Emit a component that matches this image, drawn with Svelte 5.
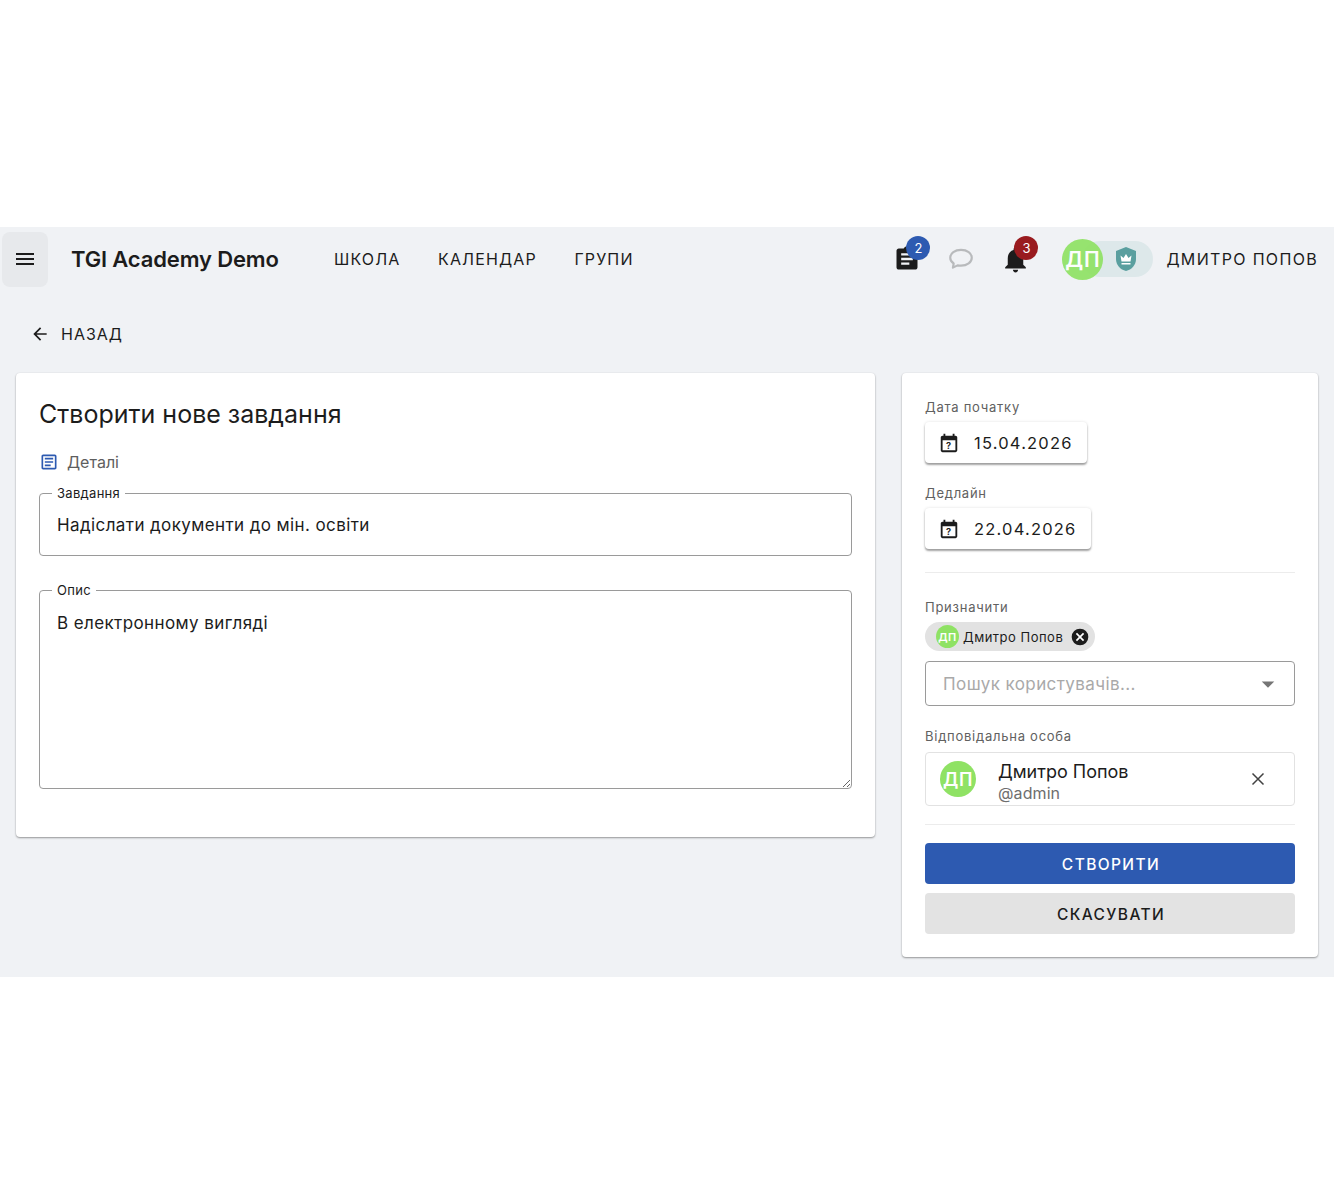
<script>
  let title = $state("Надіслати документи до мін. освіти");
  let desc = $state("В електронному вигляді");
  const nav = ["Школа", "Календар", "Групи"];
  const dates = [
    { label: "Дата початку", value: "15.04.2026" },
    { label: "Дедлайн", value: "22.04.2026" }
  ];
</script>

<div class="page">
  <header class="topbar">
    <button class="burger" aria-label="menu">
      <svg width="24" height="24" viewBox="0 0 24 24"><path d="M3 18h18v-2H3zm0-5h18v-2H3zm0-7v2h18V6z" /></svg>
    </button>
    <div class="brand">TGI Academy Demo</div>
    <nav class="nav">
      {#each nav as n}
        <span>{n}</span>
      {/each}
    </nav>
    <div class="right">
      <div class="ico tasks">
        <svg width="28" height="28" viewBox="0 0 24 24"><path d="M19 3h-4.180C14.400 1.840 13.300 1 12 1s-2.400.84-2.820 2H5c-1.100 0-2 .9-2 2v14c0 1.100.9 2 2 2h14c1.100 0 2-.9 2-2V5c0-1.100-.9-2-2-2m-5 14H7v-2h7zm3-4H7v-2h10zm0-4H7V7h10z" /></svg>
        <span class="badge blue">2</span>
      </div>
      <div class="ico chat">
        <svg width="28" height="28" viewBox="0 0 26 26"><path d="M13 4.500c-5.700 0-10 3.200-10 7.300 0 2.200 1.200 4.100 3.200 5.400l-.7 3.800 4.300-2.100c1 .2 2.100.3 3.200.3 5.700 0 10-3.200 10-7.400S18.700 4.500 13 4.500z" fill="none" stroke="#b8babc" stroke-width="2" stroke-linejoin="round" /></svg>
      </div>
      <div class="ico bell">
        <svg width="31" height="31" viewBox="0 0 24 24"><path d="M12 22c1.100 0 2-.9 2-2h-4c0 1.100.9 2 2 2m6-6v-5c0-3.070-1.630-5.640-4.500-6.320V4c0-.83-.67-1.500-1.500-1.500s-1.500.67-1.500 1.500v.68C7.640 5.360 6 7.920 6 11v5l-2 2v1h16v-1z" /></svg>
        <span class="badge red">3</span>
      </div>
      <div class="profile">
        <div class="pill">
          <svg width="24" height="26" viewBox="0 0 24 26">
            <path d="M12 1 2 5v8c0 6 4.300 10.700 10 12 5.700-1.300 10-6 10-12V5z" fill="#5a9f9f" />
            <path d="M6.500 9.500 9.500 12 12 8l2.500 4 3-2.500-1 6h-9zM7.500 17h9v1.500h-9z" fill="#fff" />
          </svg>
        </div>
        <div class="avatar big">ДП</div>
      </div>
      <span class="username">Дмитро Попов</span>
    </div>
  </header>

  <button class="back">
    <svg width="20" height="20" viewBox="0 0 24 24"><path d="M20 11H7.830l5.590-5.590L12 4l-8 8 8 8 1.410-1.410L7.830 13H20z" /></svg>
    <span>Назад</span>
  </button>

  <main class="columns">
    <section class="card left">
      <h1>Створити нове завдання</h1>
      <div class="section-title">
        <svg width="20" height="20" viewBox="0 0 24 24"><path d="M19 5v14H5V5zm0-2H5c-1.100 0-2 .9-2 2v14c0 1.100.9 2 2 2h14c1.100 0 2-.9 2-2V5c0-1.100-.9-2-2-2m-5 14H7v-2h7zm3-4H7v-2h10zm0-4H7V7h10z" fill="#2d5ab1" /></svg>
        <span>Деталі</span>
      </div>
      <fieldset class="outlined">
        <legend>Завдання</legend>
        <input bind:value={title} />
      </fieldset>
      <fieldset class="outlined area">
        <legend>Опис</legend>
        <textarea bind:value={desc}></textarea>
      </fieldset>
    </section>

    <aside class="card side">
      {#each dates as d}
        <div class="label">{d.label}</div>
        <div class="date">
          <svg width="22" height="22" viewBox="0 0 24 24">
            <path d="M19 4h-1V2h-2v2H8V2H6v2H5c-1.100 0-2 .9-2 2v14c0 1.100.9 2 2 2h14c1.100 0 2-.9 2-2V6c0-1.100-.9-2-2-2m0 16H5V9h14z" />
            <text x="12" y="18.500" text-anchor="middle" font-size="10" font-weight="700" font-family="Inter">?</text>
          </svg>
          <span>{d.value}</span>
        </div>
      {/each}

      <hr class="rule first" />

      <div class="label">Призначити</div>
      <div class="chip">
        <div class="avatar small">ДП</div>
        <span>Дмитро Попов</span>
        <svg width="20" height="20" viewBox="0 0 24 24"><circle cx="12" cy="12" r="10" fill="#1c1c1c" /><path d="M17 15.590 15.590 17 12 13.410 8.410 17 7 15.590 10.590 12 7 8.410 8.410 7 12 10.590 15.590 7 17 8.410 13.410 12z" fill="#fff" /></svg>
      </div>
      <div class="select">
        <span>Пошук користувачів...</span>
        <svg width="30" height="30" viewBox="0 0 24 24"><path d="m7 10 5 5 5-5z" fill="#757575" /></svg>
      </div>

      <div class="label resp">Відповідальна особа</div>
      <div class="person">
        <div class="avatar mid">ДП</div>
        <div class="who">
          <div class="name">Дмитро Попов</div>
          <div class="nick">@admin</div>
        </div>
        <svg width="24" height="24" viewBox="0 0 24 24"><path d="M6.500 6.500l11 11M17.500 6.500l-11 11" fill="none" stroke="#424242" stroke-width="1.500" /></svg>
      </div>

      <hr class="rule second" />

      <button class="btn primary">Створити</button>
      <button class="btn ghost">Скасувати</button>
    </aside>
  </main>
</div>

<style>
  :global(body) {
    background: #fff;
    font-family: Inter, "Liberation Sans", sans-serif;
    color: #1c1c1c;
  }

  .page {
    margin-top: 227px;
    height: 750px;
    background: #f0f2f5;
    overflow: hidden;
    box-sizing: border-box;
  }

  .topbar {
    display: flex;
    align-items: center;
    height: 64px;
    padding: 0 16px 0 2px;
  }

  .burger {
    width: 46px;
    height: 55px;
    border: 0;
    border-radius: 8px;
    background: #e7e9ec;
    display: flex;
    align-items: center;
    justify-content: center;
    padding: 0;
  }

  .burger svg {
    fill: #1c1c1c;
  }

  .brand {
    margin-left: 23px;
    width: 263px;
    font-size: 22px;
    font-weight: 600;
    letter-spacing: -0.15px;
    color: #1c1c1c;
  }

  .nav {
    display: flex;
    gap: 37.500px;
    font-size: 16px;
    letter-spacing: 1.150px;
    text-transform: uppercase;
  }

  .right {
    margin-left: auto;
    display: flex;
    align-items: center;
  }

  .ico {
    position: relative;
    width: 26px;
    height: 26px;
    display: flex;
    align-items: center;
    justify-content: center;
  }

  .ico svg {
    fill: #1c1c1c;
    flex: none;
  }

  .chat,
  .bell {
    margin-left: 28px;
  }

  .badge {
    position: absolute;
    top: -10px;
    left: 12px;
    width: 24px;
    height: 24px;
    border-radius: 50%;
    color: #fff;
    font-size: 13px;
    display: flex;
    align-items: center;
    justify-content: center;
  }

  .blue {
    background: #2d5ab1;
  }

  .red {
    background: #991b1f;
  }

  .profile {
    position: relative;
    margin-left: 34px;
    width: 91px;
    height: 36px;
  }

  .pill {
    position: absolute;
    top: 0;
    right: 0;
    width: 71px;
    height: 36px;
    border-radius: 18px;
    background: #dde8ea;
    display: flex;
    align-items: center;
    justify-content: flex-end;
    padding-right: 15px;
    box-sizing: border-box;
  }

  .avatar {
    border-radius: 50%;
    background: #8fe264;
    color: #fff;
    font-weight: 600;
    display: flex;
    align-items: center;
    justify-content: center;
    flex: none;
  }

  .avatar.big {
    position: absolute;
    top: -2px;
    left: 0;
    width: 41px;
    height: 41px;
    font-size: 21px;
    letter-spacing: 1px;
    opacity: 0.92;
  }

  .avatar.mid {
    width: 36px;
    height: 36px;
    font-size: 18px;
    letter-spacing: 0.5px;
  }

  .avatar.small {
    width: 23px;
    height: 23px;
    font-size: 11px;
  }

  .username {
    margin-left: 13px;
    font-size: 16px;
    letter-spacing: 1.33px;
    text-transform: uppercase;
    white-space: nowrap;
  }

  .back {
    display: flex;
    align-items: center;
    gap: 11px;
    margin: 28px 0 0 30px;
    padding: 0;
    height: 30px;
    border: 0;
    background: none;
    font: inherit;
    font-size: 16px;
    letter-spacing: 1px;
    text-transform: uppercase;
    color: #1c1c1c;
  }

  .back svg {
    fill: #1c1c1c;
  }

  .columns {
    display: flex;
    align-items: flex-start;
    gap: 27px;
    margin: 24px 16px 0;
  }

  .card {
    background: #fff;
    border-radius: 4px;
    box-sizing: border-box;
    box-shadow: 0 1px 2px rgba(0, 0, 0, 0.38), 0 0 2px rgba(0, 0, 0, 0.06);
  }

  .left {
    width: 859px;
    height: 464px;
    padding: 23px 23px 0;
  }

  h1 {
    margin: 0;
    font-size: 25px;
    line-height: 36px;
    font-weight: 400;
  }

  .section-title {
    display: flex;
    align-items: center;
    gap: 8px;
    margin: 18px 0 0;
    height: 24px;
    color: #5e5e5e;
    font-size: 16px;
  }

  .outlined {
    margin: 11px 0 0;
    padding: 0 17px;
    border: 1px solid #9a9a9a;
    border-radius: 4px;
    height: 71px;
    box-sizing: border-box;
  }

  .outlined.area {
    height: 207px;
    margin-top: 26px;
    position: relative;
  }

  legend {
    padding: 0 5px;
    margin-left: -5px;
    font-size: 13px;
    line-height: 16px;
    letter-spacing: 0.3px;
  }

  input,
  textarea {
    display: block;
    width: 100%;
    border: 0;
    outline: 0;
    padding: 0;
    background: none;
    font: inherit;
    font-size: 17px;
    letter-spacing: 0.4px;
    color: #1c1c1c;
  }

  input {
    height: 24px;
    margin-top: 12px;
  }

  textarea {
    position: absolute;
    left: 17px;
    right: 0;
    top: 13px;
    bottom: 0;
    width: calc(100% - 17px);
    height: calc(100% - 13px);
    line-height: 24px;
    resize: vertical;
  }

  .side {
    width: 416px;
    height: 584px;
    padding: 23px;
  }

  .label {
    font-size: 13px;
    line-height: 22px;
    letter-spacing: 0.75px;
    color: #616161;
  }

  .date {
    display: inline-flex;
    align-items: center;
    gap: 14px;
    height: 41px;
    padding: 0 14px 0 13px;
    margin: 4px 0 19px;
    border-radius: 4px;
    background: #fff;
    font-size: 16.500px;
    letter-spacing: 1.2px;
    box-shadow: 0 2px 2px rgba(0, 0, 0, 0.35), 0 0 3px rgba(0, 0, 0, 0.12);
  }

  .date svg {
    fill: #1c1c1c;
  }

  .rule {
    margin: 0;
    border: 0;
    border-top: 1px solid #ececec;
  }

  .rule.first {
    margin-top: 4px;
    margin-bottom: 23px;
  }

  .rule.second {
    margin-top: 18px;
    margin-bottom: 18px;
  }

  .chip {
    display: inline-flex;
    align-items: center;
    gap: 4px;
    height: 29px;
    padding: 0 5px 0 11px;
    margin-top: 4px;
    border-radius: 15px;
    background: #e2e2e2;
    font-size: 13px;
    letter-spacing: 0.5px;
    vertical-align: top;
  }

  .chip svg {
    margin-left: 3px;
  }

  .select {
    display: flex;
    align-items: center;
    justify-content: space-between;
    height: 45px;
    margin-top: 10px;
    padding: 0 11px 0 17px;
    border: 1px solid #9a9a9a;
    border-radius: 4px;
    box-sizing: border-box;
    font-size: 17px;
    letter-spacing: 0.4px;
    color: #a9a9a9;
  }

  .label.resp {
    margin-top: 19px;
  }

  .person {
    display: flex;
    align-items: center;
    height: 54px;
    margin-top: 5px;
    padding: 0 24px 0 14px;
    border: 1px solid #e2e2e2;
    border-radius: 4px;
    box-sizing: border-box;
  }

  .who {
    flex: 1;
    margin-left: 22px;
    padding-top: 4px;
  }

  .name {
    font-size: 18px;
    line-height: 24px;
  }

  .nick {
    margin-top: -1px;
    font-size: 16px;
    line-height: 20px;
    color: #6e6e6e;
    letter-spacing: 0.1px;
  }

  .btn {
    display: block;
    width: 100%;
    height: 41px;
    padding: 2px 0 0 2px;
    border: 0;
    border-radius: 4px;
    font: inherit;
    font-size: 15.500px;
    font-weight: 500;
    letter-spacing: 1.400px;
    text-transform: uppercase;
  }

  .primary {
    background: #2d5ab1;
    color: #fff;
  }

  .ghost {
    margin-top: 9px;
    background: #e3e3e3;
    color: #1c1c1c;
  }
</style>
